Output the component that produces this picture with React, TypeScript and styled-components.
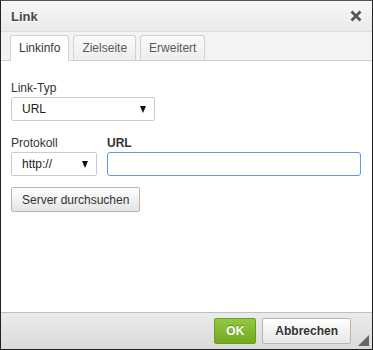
import React from 'react';
import styled, { createGlobalStyle } from 'styled-components';

const Global = createGlobalStyle`
  html, body { margin: 0; padding: 0; background: #fff; }
  body { font-family: "Liberation Sans", Arial, sans-serif; font-size: 12px; color: #333; }
`;

const Dialog = styled.div`
  width: 373px;
  height: 350px;
  box-sizing: border-box;
  border: 1px solid #222;
  border-top-color: #555;
  display: flex;
  flex-direction: column;
  background: #fff;
`;

const TitleBar = styled.div`
  height: 30px;
  flex: none;
  display: flex;
  align-items: center;
  justify-content: space-between;
  padding: 0 10px;
  background: linear-gradient(#f8f8f8, #e9e9e9);
  border-bottom: 1px solid #dcdcdc;
  font-weight: bold;
  font-size: 13px;
  color: #474747;
  text-shadow: 0 1px 0 #fff;
`;

const Close = styled.button`
  border: none;
  background: none;
  padding: 0;
  width: 12px;
  height: 12px;
  display: flex;
  cursor: pointer;
`;

const TabStrip = styled.div`
  flex: none;
  display: flex;
  gap: 4px;
  padding: 3px 0 0 9px;
  background: #f3f3f3;
  border-bottom: 1px solid #d1d1d1;
`;

const Tab = styled.div<{ $active?: boolean }>`
  line-height: 24px;
  padding: 0 8px;
  border: 1px solid #d1d1d1;
  border-bottom: none;
  border-radius: 3px 3px 0 0;
  margin-bottom: ${(p) => (p.$active ? '-1px' : '0')};
  height: ${(p) => (p.$active ? '25px' : '24px')};
  background: ${(p) => (p.$active ? '#fff' : 'linear-gradient(#fafafa, #ededed)')};
  color: ${(p) => (p.$active ? '#383838' : '#595959')};
  font-size: 12px;
`;

const Body = styled.div`
  flex: 1;
  padding: 20px 11px 0 10px;
  display: flex;
  flex-direction: column;
  align-items: flex-start;
`;

const Label = styled.label<{ $bold?: boolean }>`
  display: block;
  line-height: 15px;
  font-size: 12px;
  color: #333;
  font-weight: ${(p) => (p.$bold ? 'bold' : 'normal')};
  margin-bottom: 1px;
`;

const Field = styled.div<{ $grow?: boolean }>`
  display: flex;
  flex-direction: column;
  flex: ${(p) => (p.$grow ? '1' : 'none')};
`;

const Row = styled.div`
  display: flex;
  gap: 10px;
  align-self: stretch;
  margin-top: 15px;
`;

const Select = styled.div<{ $w: number }>`
  width: ${(p) => p.$w}px;
  height: 24px;
  box-sizing: border-box;
  border: 1px solid #c9cccf;
  border-radius: 2px;
  background: #fff;
  display: flex;
  align-items: center;
  justify-content: space-between;
  padding: 0 8px 0 10px;
  font-size: 12px;
  color: #222;
`;

const Arrow = styled.span`
  width: 0;
  height: 0;
  border-left: 3.5px solid transparent;
  border-right: 3.5px solid transparent;
  border-top: 7px solid #111;
`;

const Input = styled.div`
  height: 24px;
  box-sizing: border-box;
  border: 1px solid #5d9be3;
  border-radius: 3px;
  background: #fff;
`;

const Button = styled.button`
  margin-top: 11px;
  height: 25px;
  padding: 0 10px;
  border: 1px solid #b6b6b6;
  border-radius: 2px;
  background: linear-gradient(#fff, #e4e4e4);
  font-family: inherit;
  font-size: 12px;
  color: #333;
  cursor: pointer;
`;

const Footer = styled.div`
  flex: none;
  height: 36px;
  border-top: 1px solid #bfbfbf;
  background: linear-gradient(#ebebeb, #d9dbd9);
  display: flex;
  align-items: center;
  justify-content: flex-end;
  gap: 6px;
  padding: 0 21px 0 0;
  position: relative;
`;

const FooterButton = styled.button<{ $primary?: boolean }>`
  height: 26px;
  box-sizing: border-box;
  padding: 0 ${(p) => (p.$primary ? '11px' : '12px')};
  border-radius: 2px;
  font-family: inherit;
  font-size: 12px;
  font-weight: bold;
  cursor: pointer;
  border: 1px solid ${(p) => (p.$primary ? '#6a9c1e' : '#b6b6b6')};
  background: ${(p) =>
    p.$primary ? 'linear-gradient(#94c83e, #73aa22)' : 'linear-gradient(#fff, #e6e6e6)'};
  color: ${(p) => (p.$primary ? '#fff' : '#333')};
  text-shadow: ${(p) => (p.$primary ? '0 -1px 0 #5b8c15' : '0 1px 0 #fff')};
`;

const Grip = styled.svg`
  position: absolute;
  right: 3px;
  bottom: 3px;
`;

export default function App() {
  return (
    <>
      <Global />
      <Dialog>
        <TitleBar>
          <span>Link</span>
          <Close aria-label="Schließen">
            <svg width="12" height="12" viewBox="0 0 12 12">
              <path d="M1.5 1.5 L10.5 10.5 M10.5 1.5 L1.5 10.5" stroke="#555" strokeWidth="2.8" />
            </svg>
          </Close>
        </TitleBar>
        <TabStrip>
          <Tab $active>Linkinfo</Tab>
          <Tab>Zielseite</Tab>
          <Tab>Erweitert</Tab>
        </TabStrip>
        <Body>
          <Field>
            <Label>Link-Typ</Label>
            <Select $w={144}>
              <span>URL</span>
              <Arrow />
            </Select>
          </Field>
          <Row>
            <Field>
              <Label>Protokoll</Label>
              <Select $w={86}>
                <span>http://</span>
                <Arrow />
              </Select>
            </Field>
            <Field $grow>
              <Label $bold>URL</Label>
              <Input />
            </Field>
          </Row>
          <Button>Server durchsuchen</Button>
        </Body>
        <Footer>
          <FooterButton $primary>OK</FooterButton>
          <FooterButton>Abbrechen</FooterButton>
          <Grip width="11" height="11" viewBox="0 0 11 11">
            <path d="M11 0 L11 11 L0 11 Z" fill="#666" />
          </Grip>
        </Footer>
      </Dialog>
    </>
  );
}
